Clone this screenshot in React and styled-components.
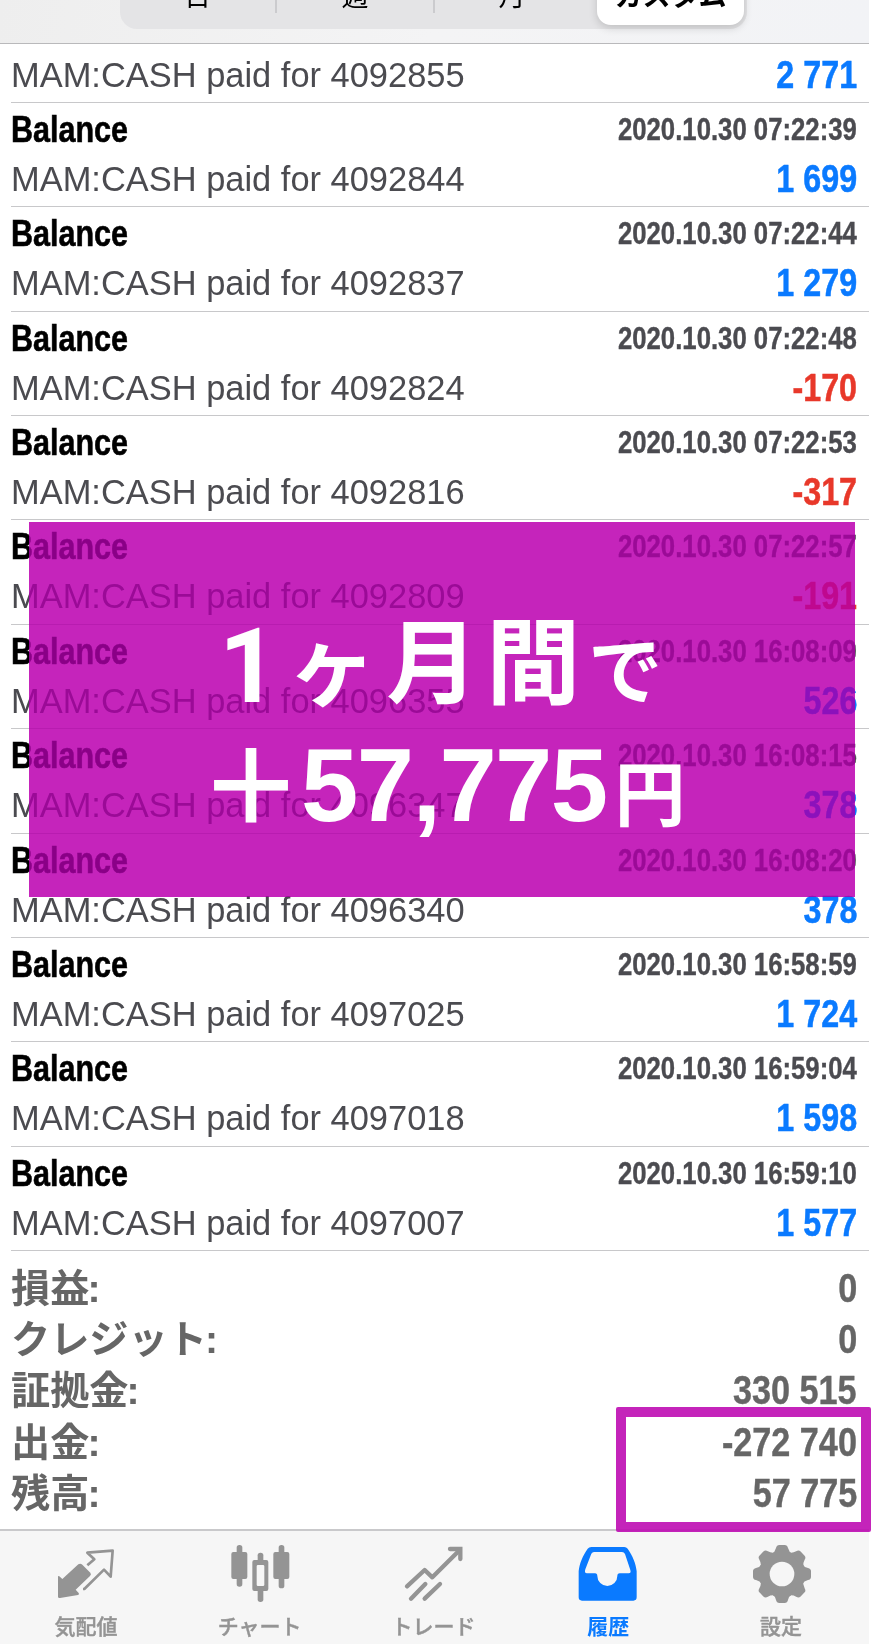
import React from "react";
import styled, { createGlobalStyle } from "styled-components";

const GlobalStyle = createGlobalStyle`
  body {
    margin: 0;
    background: #ffffff;
    font-family: "Liberation Sans", "Noto Sans CJK JP", sans-serif;
  }
`;

const Screen = styled.div`
  position: relative;
  width: 871px;
  height: 1644px;
  overflow: hidden;
`;

const Content = styled.div`
  width: 869px;
  height: 1644px;
  display: flex;
  flex-direction: column;
`;

const Header = styled.header`
  height: 44px;
  flex: none;
  box-sizing: border-box;
  border-bottom: 1px solid #b9b9bb;
  padding-left: 120px;
  padding-bottom: 14px;
  display: flex;
  align-items: flex-end;
  overflow: hidden;
  background: linear-gradient(100deg, #eeeeee 0%, #f4f4f5 50%, #f2f3f6 100%);
`;

const Segments = styled.div`
  width: 627px;
  height: 70px;
  flex: none;
  box-sizing: border-box;
  padding: 4px 3px 4px 0;
  display: flex;
  align-items: stretch;
  border-radius: 17px;
  background: #e4e4e6;
`;

const Segment = styled.div`
  width: ${props => props.width}px;
  box-sizing: border-box;
  display: flex;
  align-items: center;
  justify-content: center;
  font-size: 27px;
  font-weight: normal;
  color: #000000;
`;

const SelectedSegment = styled(Segment)`
  margin-left: auto;
  font-size: 28px;
  font-weight: bold;
  border-radius: 14px;
  background: #ffffff;
  box-shadow: 0 3px 8px rgba(0, 0, 0, 0.16);
`;

const Divider = styled.div`
  width: 2px;
  margin-bottom: 12px;
  background: #cbcbce;
`;

const Entry = styled.div`
  height: ${props => (props.short ? 59 : 104.36)}px;
  flex: none;
  box-sizing: border-box;
  margin-left: 11px;
  padding-right: 12px;
  padding-top: ${props => (props.short ? 8 : 1)}px;
  border-bottom: 1px solid #c8c8ca;
`;

const Line = styled.div`
  height: ${props => props.height}px;
  display: flex;
  justify-content: space-between;
  align-items: flex-start;
  white-space: nowrap;
`;

const Title = styled.span`
  font-size: 37px;
  line-height: 52px;
  font-weight: bold;
  color: #000000;
  -webkit-text-stroke: 0.6px currentColor;
  transform: scaleX(0.825);
  transform-origin: left;
`;

const Time = styled.span`
  font-size: 31px;
  line-height: 51px;
  font-weight: bold;
  color: #4b4b50;
  -webkit-text-stroke: 0.4px currentColor;
  transform: scaleX(0.83);
  transform-origin: right;
`;

const Comment = styled.span`
  font-size: 35.5px;
  line-height: 47px;
  color: #4b4b50;
  transform: scaleX(0.97);
  transform-origin: left;
`;

const Amount = styled.span`
  font-size: 38px;
  line-height: 46px;
  font-weight: bold;
  color: ${props => (props.negative ? "#e8382a" : "#0a7aff")};
  -webkit-text-stroke: 0.5px currentColor;
  transform: scaleX(0.85);
  transform-origin: right;
`;

const Summary = styled.div`
  flex: 1;
  padding: 12px 12px 0 11px;
`;

const SummaryRow = styled.div`
  height: 51.2px;
  display: flex;
  justify-content: space-between;
  line-height: 51.2px;
  font-weight: bold;
  color: #666666;
`;

const SummaryLabel = styled.span`
  font-size: 39.2px;
`;

const Colon = styled.span`
  margin-left: -2px;
`;

const SummaryValue = styled.span`
  font-size: 40px;
  -webkit-text-stroke: 0.4px currentColor;
  transform: scaleX(0.855);
  transform-origin: right;
`;

const TabBar = styled.nav`
  height: 115px;
  flex: none;
  box-sizing: border-box;
  border-top: 2px solid #c9c9cb;
  display: flex;
  background: #f6f6f6;
`;

const Tab = styled.div`
  flex: 1;
  display: flex;
  flex-direction: column;
  align-items: center;
  color: ${props => (props.$active ? "#0a7aff" : "#949494")};
`;

const TabIcon = styled.svg`
  width: 58px;
  height: 58px;
  margin-top: 14px;
  overflow: visible;
`;

const TabLabel = styled.span`
  margin-top: 12px;
  margin-right: ${props => (props.$active ? 0 : 2)}px;
  font-size: 21px;
  line-height: 24px;
  font-weight: ${props => (props.$active ? "bold" : 500)};
  -webkit-text-stroke: ${props => (props.$active ? 0 : 0.4)}px currentColor;
`;

const Banner = styled.div`
  position: absolute;
  left: 29px;
  top: 522px;
  width: 826px;
  height: 375px;

  &::before {
    content: "";
    position: absolute;
    inset: 0;
    background: #fc9de2;
    mix-blend-mode: multiply;
  }
`;

const BannerBody = styled.div`
  position: relative;
  height: 375px;
  box-sizing: border-box;
  padding-top: 80px;
  background: rgba(180, 0, 175, 0.77);
`;

const BannerLine = styled.div`
  height: 122px;
  line-height: 122px;
  padding-left: ${props => props.indent}px;
  display: flex;
  align-items: baseline;
  white-space: nowrap;
  font-weight: bold;
  color: #ffffff;
`;

const Glyphs = styled.span`
  font-size: ${props => props.size}px;
  margin-left: ${props => props.gap || 0}px;
  transform: translateY(${props => props.drop || 0}px);
`;

const Numeral = styled(Glyphs)`
  font-family: Roboto, "Liberation Sans", sans-serif;
`;

const Sum = styled(Glyphs)`
  letter-spacing: -1.6px;
`;

const Highlight = styled.div`
  position: absolute;
  left: 616px;
  top: 1407px;
  width: 255px;
  height: 125px;
  box-sizing: border-box;
  border: 10px solid rgba(190, 12, 178, 0.9);
  border-radius: 2px;
`;

const entries = [
  { id: 4092844, time: "2020.10.30 07:22:39", amount: "1 699" },
  { id: 4092837, time: "2020.10.30 07:22:44", amount: "1 279" },
  { id: 4092824, time: "2020.10.30 07:22:48", amount: "-170" },
  { id: 4092816, time: "2020.10.30 07:22:53", amount: "-317" },
  { id: 4092809, time: "2020.10.30 07:22:57", amount: "-191" },
  { id: 4096355, time: "2020.10.30 16:08:09", amount: "526" },
  { id: 4096347, time: "2020.10.30 16:08:15", amount: "378" },
  { id: 4096340, time: "2020.10.30 16:08:20", amount: "378" },
  { id: 4097025, time: "2020.10.30 16:58:59", amount: "1 724" },
  { id: 4097018, time: "2020.10.30 16:59:04", amount: "1 598" },
  { id: 4097007, time: "2020.10.30 16:59:10", amount: "1 577" }
];

const totals = [
  { label: "損益", value: "0" },
  { label: "クレジット", value: "0" },
  { label: "証拠金", value: "330 515" },
  { label: "出金", value: "-272 740" },
  { label: "残高", value: "57 775" }
];

const QuotesIcon = () => (
  <TabIcon viewBox="174 75 174 174" fill="currentColor">
    <path
      d="M174 170 Q174 166 178 169 L187 177 L235 133 Q241 129 247 134 L271 158 Q275 163 270 168 L227 209 L236 219 Q239 223 234 225 L180 234 Q174 235 174 230 Z"
    />
    <path
      d="M262 136 L283 118 L262 98 L338 92 L332 170 L312 149 L253 207 L249 207"
      fill="none"
      stroke="currentColor"
      strokeWidth="8"
      strokeLinejoin="round"
    />
  </TabIcon>
);

const ChartIcon = () => (
  <TabIcon viewBox="695 75 174 174" fill="currentColor">
    <rect x="709" y="75" width="17" height="125" rx="8" />
    <rect x="693" y="96" width="48" height="81" rx="6" />
    <rect x="835" y="75" width="17" height="130" rx="8" />
    <rect x="819" y="96" width="48" height="81" rx="6" />
    <rect x="772" y="98" width="17" height="30" rx="8" />
    <rect x="772" y="204" width="17" height="42" rx="8" />
    <path
      fillRule="evenodd"
      d="M762 120 H798 Q804 120 804 126 V207 Q804 213 798 213 H762 Q756 213 756 207 V126 Q756 120 762 120 Z M773 135 Q769 135 769 139 V194 Q769 198 773 198 H788 Q792 198 792 194 V139 Q792 135 788 135 Z"
    />
  </TabIcon>
);

const TradeIcon = () => (
  <TabIcon
    viewBox="346 75 174 174"
    fill="none"
    stroke="currentColor"
    strokeWidth="13"
    strokeLinecap="round"
    strokeLinejoin="round"
  >
    <path d="M352 199 L405 150 L428 172 L508 92" />
    <path d="M481 87 H512 V117" strokeLinejoin="miter" />
    <path d="M364 236 L407 192" />
    <path d="M405 236 L451 192" />
  </TabIcon>
);

const HistoryIcon = () => (
  <TabIcon viewBox="25 75 174 174" fill="currentColor">
    <path
      fillRule="evenodd"
      d="M62 81 H161 Q167 81 171 86 C186 107 196 132 198 154 V232 Q198 242 188 242 H34 Q24 242 24 232 V154 C26 132 36 107 51 86 Q55 81 62 81 Z M70 96 Q65 96 62 101 L44 148 Q40 160 49 160 H73 Q80 160 80 168 A30 30 0 0 0 140 168 Q140 160 147 160 H174 Q182 160 179 150 L163 102 Q160 96 154 96 Z"
    />
  </TabIcon>
);

const SettingsIcon = () => (
  <TabIcon viewBox="-87 -87 174 174" fill="currentColor">
    <mask id="gearHole">
      <rect x="-90" y="-90" width="180" height="180" fill="#fff" />
      <circle r="37" fill="#000" />
    </mask>
    <g mask="url(#gearHole)">
      <circle r="69" />
      {[0, 45, 90, 135, 180, 225, 270, 315].map(angle => (
        <path
          key={angle}
          transform={`rotate(${angle})`}
          d="M-31 -60 Q-21 -66 -18 -78 Q-16 -87 -8 -87 H8 Q16 -87 18 -78 Q21 -66 31 -60 Z"
        />
      ))}
    </g>
  </TabIcon>
);

const tabs = [
  { label: "気配値", Icon: QuotesIcon },
  { label: "チャート", Icon: ChartIcon },
  { label: "トレード", Icon: TradeIcon },
  { label: "履歴", Icon: HistoryIcon, active: true },
  { label: "設定", Icon: SettingsIcon }
];

const Deal = ({ id, amount }) => (
  <Line height={47}>
    <Comment>MAM:CASH paid for {id}</Comment>
    <Amount negative={amount.startsWith("-") ? 1 : undefined}>{amount}</Amount>
  </Line>
);

const App = () => (
  <Screen>
    <GlobalStyle />
    <Content>
      <Header>
        <Segments>
          <Segment width={155}>日</Segment>
          <Divider />
          <Segment width={156}>週</Segment>
          <Divider />
          <Segment width={154}>月</Segment>
          <SelectedSegment width={147}>カスタム</SelectedSegment>
        </Segments>
      </Header>

      <Entry short>
        <Deal id={4092855} amount="2 771" />
      </Entry>
      {entries.map(entry => (
        <Entry key={entry.id}>
          <Line height={52}>
            <Title>Balance</Title>
            <Time>{entry.time}</Time>
          </Line>
          <Deal id={entry.id} amount={entry.amount} />
        </Entry>
      ))}

      <Summary>
        {totals.map(({ label, value }) => (
          <SummaryRow key={label}>
            <SummaryLabel>
              {label}
              <Colon>:</Colon>
            </SummaryLabel>
            <SummaryValue>{value}</SummaryValue>
          </SummaryRow>
        ))}
      </Summary>

      <TabBar>
        {tabs.map(({ label, Icon, active }) => (
          <Tab key={label} $active={active}>
            <Icon />
            <TabLabel $active={active}>{label}</TabLabel>
          </Tab>
        ))}
      </TabBar>
    </Content>

    <Banner>
      <BannerBody>
        <BannerLine indent={190}>
          <Numeral size={103} drop={4}>1</Numeral>
          <Glyphs size={88} gap={10}>ヶ</Glyphs>
          <Glyphs size={92} gap={10} drop={-2}>月</Glyphs>
          <Glyphs size={94} gap={8} drop={-1}>間</Glyphs>
          <Glyphs size={74} gap={8}>で</Glyphs>
        </BannerLine>
        <BannerLine indent={170}>
          <Glyphs size={104} drop={4}>＋</Glyphs>
          <Sum size={103} gap={-2}>57,775</Sum>
          <Glyphs size={71} gap={8} drop={-1}>円</Glyphs>
        </BannerLine>
      </BannerBody>
    </Banner>
    <Highlight />
  </Screen>
);

export default App;
